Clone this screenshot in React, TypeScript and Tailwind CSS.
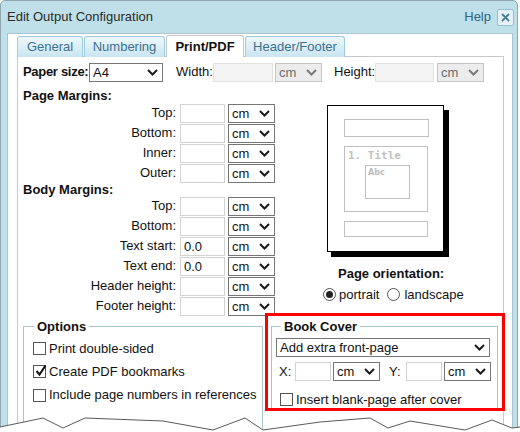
import React from "react";

const Chevron = ({ color = "#1a1a1a" }: { color?: string }) => (
  <svg width="11" height="7" viewBox="0 0 11 7">
    <polyline points="1,1 5.5,5.5 10,1" fill="none" stroke={color} strokeWidth="2" />
  </svg>
);

const Select = ({ w, text, disabled }: { w: string; text: string; disabled?: boolean }) => (
  <div
    className={`flex h-[19px] shrink-0 items-center justify-between border pl-[3px] pr-[4px] text-[13px] leading-none ${w} ${
      disabled ? "border-[#c4c4c4] bg-[#ececec] text-[#6b6b6b]" : "border-[#767676] bg-white text-[#111]"
    }`}
  >
    <span className="whitespace-nowrap">{text}</span>
    <Chevron color={disabled ? "#7a7a7a" : "#1a1a1a"} />
  </div>
);

const Field = ({ w, value, disabled }: { w: string; value?: string; disabled?: boolean }) => (
  <div
    className={`flex h-[19px] shrink-0 items-center border pl-[3px] text-[13px] leading-none text-[#111] ${w} ${
      disabled ? "border-[#e2e2e2] bg-[#f4f4f4]" : "border-[#d3d3d3] bg-white"
    }`}
  >
    {value}
  </div>
);

const Checkbox = ({ checked }: { checked?: boolean }) => (
  <div className="relative h-[13px] w-[13px] shrink-0 border border-[#555] bg-white">
    {checked && (
      <svg className="absolute left-[1px] top-[-2px]" width="12" height="13" viewBox="0 0 12 13">
        <polyline points="1.5,7 4.5,10.5 10.5,1.5" fill="none" stroke="#111" strokeWidth="2" />
      </svg>
    )}
  </div>
);

const Radio = ({ checked }: { checked?: boolean }) => (
  <div className="flex h-[13px] w-[13px] shrink-0 items-center justify-center rounded-full border border-[#555] bg-white">
    {checked && <div className="h-[7px] w-[7px] rounded-full bg-[#222]" />}
  </div>
);

const MarginRow = ({ label, value }: { label: string; value?: string }) => (
  <div className="flex h-[20px] items-center">
    <span className="w-[153px] shrink-0 whitespace-nowrap text-right text-[13px] text-[#111]">{label}</span>
    <div className="ml-[4px]">
      <Field w="w-[45px]" value={value} />
    </div>
    <div className="ml-[3px]">
      <Select w="w-[47px]" text="cm" />
    </div>
  </div>
);

// little drawing of the page layout
const PagePreview = () => (
  <svg width="123" height="153" viewBox="0 0 123 153">
    <rect x="4" y="5" width="118" height="147" fill="#000" />
    <rect x="0.5" y="0.5" width="116" height="146" fill="#fff" stroke="#000" />
    <rect x="17.5" y="14.5" width="84" height="17" fill="none" stroke="#c0c0c0" />
    <rect x="17.5" y="41.5" width="83" height="65" fill="none" stroke="#c0c0c0" />
    <text x="21" y="54" fontFamily="DejaVu Sans Mono, monospace" fontWeight="bold" fontSize="11" fill="#c2c2c2">
      1. Title
    </text>
    <rect x="38.5" y="60.5" width="44" height="33" fill="none" stroke="#c0c0c0" />
    <text x="41" y="70" fontFamily="DejaVu Sans, sans-serif" fontWeight="bold" fontSize="8" fill="#bdbdbd">
      Abc
    </text>
    <rect x="17.5" y="116.5" width="83" height="15" fill="none" stroke="#c0c0c0" />
  </svg>
);

const tabs = [
  { name: "General", w: "w-[66px]" },
  { name: "Numbering", w: "w-[81px]" },
  { name: "Print/PDF", w: "w-[78px]", active: true },
  { name: "Header/Footer", w: "w-[100px]" },
];

const pageMargins = ["Top:", "Bottom:", "Inner:", "Outer:"];
const bodyMargins: [string, string?][] = [
  ["Top:"],
  ["Bottom:"],
  ["Text start:", "0.0"],
  ["Text end:", "0.0"],
  ["Header height:"],
  ["Footer height:"],
];

export default function App() {
  return (
    <div className="relative h-[432px] w-[520px] overflow-hidden bg-white font-['Liberation_Sans',Arial,sans-serif]">
      <div className="flex h-[460px] w-[518px] flex-col rounded-t-[5px] border border-[#8fa7af] bg-[#bfe0e8]">
        {/* title bar */}
        <div className="flex h-[32px] shrink-0 items-center justify-between pl-[6px] pr-[3px]">
          <span className="text-[13px] text-[#2a2a2a]">Edit Output Configuration</span>
          <div className="flex items-center">
            <span className="text-[13px] text-[#2b6583]">Help</span>
            <div className="ml-[6px] flex h-[17px] w-[17px] items-center justify-center rounded-[2px] border border-[#94bfd2] bg-[#e4f2f8]">
              <svg width="9" height="9" viewBox="0 0 9 9">
                <path d="M1 1 L8 8 M8 1 L1 8" stroke="#4d7d95" strokeWidth="1.8" />
              </svg>
            </div>
          </div>
        </div>

        {/* white body */}
        <div className="ml-[6px] w-[506px] flex-1 border border-[#a9c7d0] bg-white">
          {/* tabs */}
          <div className="flex h-[23px] items-end gap-[1px] pl-[9px] pt-[1px]">
            {tabs.map((t) =>
              t.active ? (
                <div
                  key={t.name}
                  className={`relative z-10 flex h-[22px] items-center justify-center rounded-t-[3px] border border-b-0 border-[#c6c6c6] bg-white text-[13px] font-bold text-[#111] ${t.w}`}
                >
                  {t.name}
                </div>
              ) : (
                <div
                  key={t.name}
                  className={`flex h-[21px] items-center justify-center rounded-t-[3px] border border-b-0 border-[#9ecbe0] bg-gradient-to-b from-[#eef8fc] to-[#c8e5f1] pb-[1px] text-[13px] text-[#3d7190] ${t.w}`}
                >
                  {t.name}
                </div>
              )
            )}
          </div>

          {/* tab panel */}
          <div className="-mt-px ml-[9px] h-[400px] w-[487px] border border-[#c9c9c9] bg-white pl-[5px] text-[#111]">
            {/* paper size row */}
            <div className="mt-[5px] flex h-[20px] items-center text-[13px]">
              <span className="w-[66px] shrink-0 whitespace-nowrap font-bold tracking-[-0.3px]">Paper size:</span>
              <Select w="w-[74px]" text="A4" />
              <span className="ml-[13px] w-[37px] shrink-0">Width:</span>
              <Field w="w-[60px]" disabled />
              <div className="ml-[2px]">
                <Select w="w-[47px]" text="cm" disabled />
              </div>
              <span className="ml-[12px] w-[41px] shrink-0">Height:</span>
              <Field w="w-[59px]" disabled />
              <div className="ml-[3px]">
                <Select w="w-[47px]" text="cm" disabled />
              </div>
            </div>

            <div className="flex">
              {/* left column: margins */}
              <div className="w-[252px] shrink-0">
                <div className="mt-[7px] h-[14px] whitespace-nowrap text-[13px] font-bold leading-[14px]">Page Margins:</div>
                {pageMargins.map((l) => (
                  <MarginRow key={"p" + l} label={l} />
                ))}
                <div className="h-[13px] whitespace-nowrap text-[13px] font-bold leading-[13px]">Body Margins:</div>
                {bodyMargins.map(([l, v]) => (
                  <MarginRow key={"b" + l} label={l} value={v} />
                ))}
              </div>

              {/* right column: page preview */}
              <div className="ml-[52px] flex flex-col items-start">
                <div className="mt-[23px] h-[153px]">
                  <PagePreview />
                </div>
                <div className="ml-[11px] mt-[8px] whitespace-nowrap text-[13px] font-bold leading-[15px]">Page orientation:</div>
                <div className="-ml-[4px] mt-[6px] flex h-[15px] items-center whitespace-nowrap text-[13px]">
                  <Radio checked />
                  <span className="ml-[3px]">portrait</span>
                  <div className="ml-[8px]">
                    <Radio />
                  </div>
                  <span className="ml-[4px]">landscape</span>
                </div>
              </div>
            </div>

            {/* bottom: options + book cover */}
            <div className="-mt-[3px] flex items-start">
              <fieldset className="mt-[6px] h-[120px] w-[240px] shrink-0 border border-[#a9c3cf] pl-[9px]">
                <legend className="ml-[1px] px-[3px] text-[13px] font-bold leading-[15px]">Options</legend>
                <div className="mt-[3px] flex h-[23px] items-center whitespace-nowrap text-[13px]">
                  <Checkbox />
                  <span className="ml-[3px]">Print double-sided</span>
                </div>
                <div className="flex h-[23px] items-center whitespace-nowrap text-[13px]">
                  <Checkbox checked />
                  <span className="ml-[3px]">Create PDF bookmarks</span>
                </div>
                <div className="flex h-[24px] items-center whitespace-nowrap text-[13px]">
                  <Checkbox />
                  <span className="ml-[3px]">Include page numbers in references</span>
                </div>
              </fieldset>

              <div className="ml-[2px] h-[98px] w-[240px] shrink-0 overflow-hidden border-[3px] border-[#ff0000] bg-white pl-[3px]">
                <fieldset className="mt-[3px] h-[120px] w-[226px] border border-[#a9c3cf] pl-[4px] pr-[6px]">
                  <legend className="ml-[5px] px-[3px] text-[13px] font-bold leading-[15px]">Book Cover</legend>
                  <div className="mt-[4px]">
                    <Select w="w-[214px]" text="Add extra front-page" />
                  </div>
                  <div className="mt-[5px] flex h-[19px] items-center text-[13px]">
                    <span className="ml-[3px] w-[16px] shrink-0">X:</span>
                    <Field w="w-[36px]" />
                    <div className="ml-[2px]">
                      <Select w="w-[47px]" text="cm" />
                    </div>
                    <span className="ml-[9px] w-[17px] shrink-0">Y:</span>
                    <Field w="w-[36px]" />
                    <div className="ml-[2px]">
                      <Select w="w-[47px]" text="cm" />
                    </div>
                  </div>
                  <div className="mt-[9px] flex items-center whitespace-nowrap text-[13px]">
                    <div className="ml-[4px]">
                      <Checkbox />
                    </div>
                    <span className="ml-[3px]">Insert blank-page after cover</span>
                  </div>
                </fieldset>
              </div>
            </div>
          </div>
        </div>
      </div>

      {/* torn bottom edge */}
      <svg className="absolute bottom-0 left-0" width="520" height="20" viewBox="0 0 520 20">
        <polygon
          points="0,15 43,6 63,16 85,6 163,9 213,18 245,6 263,18 320,10 370,6 388,16 410,9 465,18 492,8 512,16 520,15 520,20 0,20"
          fill="#fff"
        />
        <polyline
          points="0,15 43,6 63,16 85,6 163,9 213,18 245,6 263,18 320,10 370,6 388,16 410,9 465,18 492,8 512,16 520,15"
          fill="none"
          stroke="#5a5a5a"
          strokeWidth="1"
        />
      </svg>
    </div>
  );
}
